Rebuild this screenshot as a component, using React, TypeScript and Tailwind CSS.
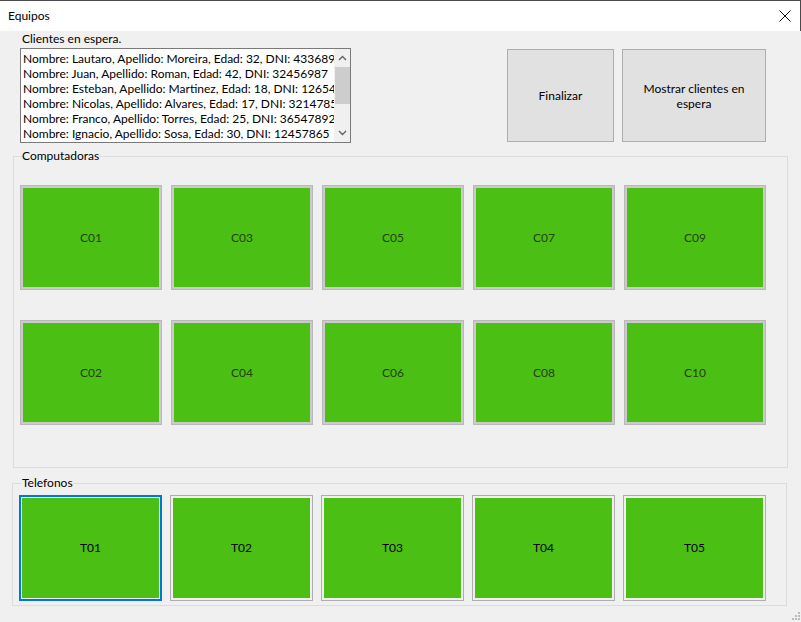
import React from "react";

const clientes = [
  "Nombre: Lautaro, Apellido: Moreira, Edad: 32, DNI: 43368965",
  "Nombre: Juan, Apellido: Roman, Edad: 42, DNI: 32456987",
  "Nombre: Esteban, Apellido: Martinez, Edad: 18, DNI: 12654789",
  "Nombre: Nicolas, Apellido: Alvares, Edad: 17, DNI: 32147852",
  "Nombre: Franco, Apellido: Torres, Edad: 25, DNI: 36547892",
  "Nombre: Ignacio, Apellido: Sosa, Edad: 30, DNI: 12457865",
];

const computadoras = ["C01", "C03", "C05", "C07", "C09", "C02", "C04", "C06", "C08", "C10"];
const telefonos = ["T01", "T02", "T03", "T04", "T05"];

function Chevron({ up }: { up?: boolean }) {
  return (
    <svg width="9" height="6" viewBox="0 0 9 6">
      <polyline
        points={up ? "1,5 4.5,1.5 8,5" : "1,1 4.5,4.5 8,1"}
        fill="none"
        stroke="#606060"
        strokeWidth="1.3"
      />
    </svg>
  );
}

function Equipo({ nombre, foco }: { nombre: string; foco?: boolean }) {
  return (
    <div
      className={
        "w-[143px] h-[106px] p-[1px] " +
        (foco ? "border-2 border-[#0078d7]" : "border border-[#adadad] p-[2px]")
      }
    >
      <div className="w-full h-full bg-[#4bbf14] flex items-center justify-center text-black">
        {nombre}
      </div>
    </div>
  );
}

export default function App() {
  return (
    <div
      className="w-[801px] h-[622px] flex flex-col text-[12px] text-black overflow-hidden"
      style={{ fontFamily: "Lato, 'Noto Sans', sans-serif" }}
    >
      <div className="h-[31px] shrink-0 bg-white border-t border-r border-[#4a4a4a] flex items-center justify-between pl-[8px] pr-[9px]">
        <span>Equipos</span>
        <svg width="12" height="12" viewBox="0 0 12 12">
          <path d="M0.5 0.5 L11.5 11.5 M11.5 0.5 L0.5 11.5" stroke="#111" strokeWidth="1" />
        </svg>
      </div>

      <div className="flex-1 bg-[#f0f0f0] relative">
        <div className="flex">
          <div className="ml-[20px]">
            <div className="ml-[2px] h-[16px] leading-[16px]">Clientes en espera.</div>
            <div className="mt-[1px] w-[331px] h-[95px] bg-white border border-[#7a7a7a] flex">
              <div className="flex-1 overflow-hidden pl-[2px] pt-[2px] leading-[15px] whitespace-nowrap">
                {clientes.map((c) => (
                  <div key={c}>{c}</div>
                ))}
              </div>
              <div className="w-[16px] bg-[#f0f0f0] flex flex-col items-center">
                <div className="h-[18px] flex items-center justify-center">
                  <Chevron up />
                </div>
                <div className="w-[15px] h-[37px] bg-[#cdcdcd]" />
                <div className="flex-1" />
                <div className="h-[18px] flex items-center justify-center">
                  <Chevron />
                </div>
              </div>
            </div>
          </div>
          <div className="ml-[156px] mt-[18px] flex gap-[8px]">
            <button className="w-[107px] h-[93px] bg-[#e1e1e1] border border-[#adadad]">Finalizar</button>
            <button className="w-[144px] h-[93px] bg-[#e1e1e1] border border-[#adadad] leading-[15px] px-[16px]">
              Mostrar clientes en espera
            </button>
          </div>
        </div>

        <fieldset className="ml-[13px] mt-[5px] w-[775px] border border-[#dcdcdc]">
          <legend className="ml-[8px] leading-[16px]">Computadoras</legend>
          <div className="grid grid-cols-5 gap-x-[9px] gap-y-[30px] ml-[6px] mt-[21px] mb-[42px] w-[746px]">
            {computadoras.map((c) => (
              <div key={c} className="w-[142px] h-[105px] border border-[#b9b9b9] p-[2px] bg-[#cacaca]">
                <div className="w-full h-full bg-[#4bbf14] flex items-center justify-center text-[#26420f]">
                  {c}
                </div>
              </div>
            ))}
          </div>
        </fieldset>

        <fieldset className="ml-[12px] mt-[7px] w-[775px] border border-[#dcdcdc]">
          <legend className="ml-[9px] leading-[16px]">Telefonos</legend>
          <div className="flex gap-[8px] ml-[6px] mt-[4px] mb-[4px]">
            {telefonos.map((t, i) => (
              <Equipo key={t} nombre={t} foco={i === 0} />
            ))}
          </div>
        </fieldset>

        <svg className="absolute right-0 bottom-0" width="12" height="11" viewBox="0 0 12 11">
          <rect x="9" y="1" width="2" height="2" fill="#bcbcbc" />
          <rect x="6" y="4" width="2" height="2" fill="#bcbcbc" />
          <rect x="9" y="4" width="2" height="2" fill="#bcbcbc" />
          <rect x="3" y="7" width="2" height="2" fill="#bcbcbc" />
          <rect x="6" y="7" width="2" height="2" fill="#bcbcbc" />
          <rect x="9" y="7" width="2" height="2" fill="#bcbcbc" />
        </svg>
      </div>
    </div>
  );
}
